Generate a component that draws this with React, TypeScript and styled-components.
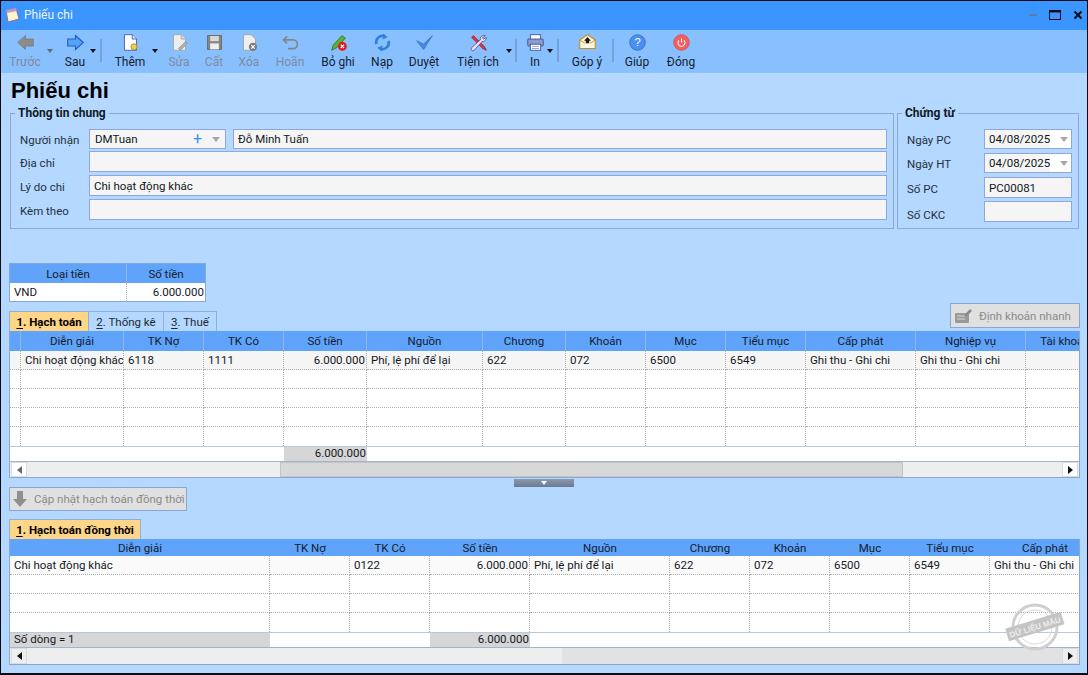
import React from "react";
import styled, { createGlobalStyle } from "styled-components";

const Global = createGlobalStyle`
  html, body { margin: 0; padding: 0; background: #b4d8ff; }
  body { font: 11.5px Roboto, "Liberation Sans", sans-serif; color: #16202c; }
  * { box-sizing: border-box; }
`;

const Win = styled.div`
  width: 1088px; height: 675px; overflow: hidden; display: flex; flex-direction: column;
  border: 1px solid #0a0a14; border-bottom-width: 2px; background: #b4d8ff;
`;
const TitleBar = styled.div`
  height: 29px; flex: none; background: #3a95fe; display: flex; align-items: center; padding: 0 4px 1px 3px; color: #fff;
`;
const TitleText = styled.span` margin-left: 4px; font-size: 12px; color: #eaf4ff; `;
const WinBtns = styled.div` margin-left: auto; display: flex; align-items: center; gap: 12px; `;

const Toolbar = styled.div`
  height: 43px; flex: none; background: #88c0ff; display: flex; padding-left: 2px;
`;
const ToolBtn = styled.div<{ $w: number; $ml?: number; $off?: boolean }>`
  width: ${p => p.$w}px; margin-left: ${p => p.$ml ?? 0}px; flex: none;
  display: flex; flex-direction: column; align-items: center; padding-top: 3px;
  color: ${p => (p.$off ? "#7f8c9c" : "#16202c")}; white-space: nowrap; font-size: 12px;
  svg { display: block; flex: none; }
  span { margin-top: 2px; line-height: 16px; }
`;
const CaretBox = styled.div<{ $w: number; $c?: string }>`
  width: ${p => p.$w}px; flex: none; padding-top: 19px;
  &::before { content: ""; display: block; width: 0; height: 0; border: 3.5px solid transparent; border-bottom: 0; border-top: 4px solid ${p => p.$c ?? "#10141c"}; }
`;
const Sep = styled.div<{ $ml?: number }>`
  width: 2px; height: 23px; margin: 9px 0 0 ${p => p.$ml ?? 0}px; flex: none; background: #75a3d8;
`;

const Body = styled.div` flex: 1; display: flex; flex-direction: column; padding: 0 7px 0 8px; min-height: 0; `;
const Heading = styled.h1`
  margin: 5px 0 0 2px; font: bold 22px/25px "Liberation Sans", sans-serif; color: #000; height: 25px; flex: none;
`;
const TopRow = styled.div` display: flex; gap: 3px; margin: 3px 0 0 1px; flex: none; `;
const Group = styled.fieldset<{ $w: number }>`
  width: ${p => p.$w}px; height: 123px; margin: 0; padding: 0 6px 0 8px; border: 1px solid #8ea8d6; flex: none; min-width: 0;
  display: flex; flex-direction: column;
`;
const Legend = styled.legend`
  margin-left: -4px; padding: 0 3px; font-weight: bold; font-size: 12px; line-height: 14px; color: #10181f;
`;
const FormRow = styled.div<{ $h?: number; $top?: number }>`
  display: flex; align-items: center; height: ${p => p.$h ?? 21}px; margin-top: ${p => p.$top ?? 3}px;
`;
const Label = styled.label<{ $w: number; $pt?: number }>` width: ${p => p.$w}px; flex: none; color: #24303c; white-space: nowrap; padding: ${p => p.$pt ?? 2}px 0 0 1px; `;
const Input = styled.div<{ $grow?: boolean; $w?: number; $bg?: string; $ml?: number }>`
  ${p => (p.$grow ? "flex: 1;" : `width: ${p.$w}px; flex: none;`)}
  margin-left: ${p => p.$ml ?? 0}px;
  height: 100%; background: ${p => p.$bg ?? "#f5f5f5"}; border: 1.5px solid #8fa7df; display: flex; align-items: center;
  padding: 0 4px; color: #101820; white-space: nowrap; overflow: hidden;
`;
const Combo = styled(Input)` padding: 0 0 0 5px; `;
const Plus = styled.span` margin-left: auto; color: #2f96f2; font-size: 16px; line-height: 16px; font-weight: normal; `;
const Arrow = styled.i`
  width: 0; height: 0; margin: 1px 5px 0 10px; border: 4px solid transparent; border-bottom: 0; border-top: 5px solid #a8a8a8; flex: none;
`;
const DateVal = styled.span` flex: 1; align-self: stretch; background: #f5f5f5; margin-left: -4px; padding-left: 4px; display: flex; align-items: center; `;

const Spacer = styled.div<{ $h: number }>` height: ${p => p.$h}px; flex: none; `;

const Table = styled.div<{ $cols: string; $w: number }>`
  width: ${p => p.$w}px; flex: none; overflow: hidden;
  display: grid; grid-template-columns: ${p => p.$cols}; background: #fff;
`;
const Head = styled.div<{ $h: number; $line?: boolean }>`
  height: ${p => p.$h}px; background: #5fa3fa; display: flex; align-items: center; justify-content: center;
  color: #14202e; white-space: nowrap; overflow: hidden;
  border-right: ${p => (p.$line ? "1px solid #8cb4e4" : "0")};
`;
const Cell = styled.div<{ $h: number; $bg?: string; $right?: boolean; $dot?: boolean; $dotRight?: boolean; $span?: string; $foot?: boolean }>`
  height: ${p => p.$h}px; background: ${p => p.$bg ?? "#fff"}; display: flex; align-items: center;
  justify-content: ${p => (p.$right ? "flex-end" : "flex-start")}; padding: 0 1px ${p => (p.$foot ? 2 : 0)}px 4px; color: #14181f;
  white-space: nowrap; overflow: hidden;
  ${p => (p.$span ? `grid-column: ${p.$span};` : "")}
  border-top: ${p => (p.$foot ? "1px solid #b8c8dc" : "0")};
  border-bottom: ${p => (p.$dot ? "1px dotted #b0b0b0" : "0")};
  border-right: ${p => (p.$dotRight ? "1px dotted #b0b0b0" : "0")};
`;
const Frame = styled.div<{ $h: number }>`
  width: 1071px; height: ${p => p.$h}px; flex: none; border: 1px solid #8ba6d2; border-top: 0; background: #fff; overflow: hidden;
  position: relative; display: flex; flex-direction: column;
`;
const CurrencyFrame = styled.div`
  width: 197px; height: 39px; flex: none; border: 1px solid #8ba6d2; background: #fff; overflow: hidden;
`;

const TabsRow = styled.div` display: flex; align-items: flex-end; height: 29px; flex: none; width: 1071px; `;
const Tab = styled.div<{ $w: number; $on?: boolean }>`
  width: ${p => p.$w}px; height: 20px; flex: none; border: 1px solid #8eaede; border-bottom: 0; margin-right: -1px;
  background: ${p => (p.$on ? "#ffd588" : "#b4d8ff")}; font-weight: ${p => (p.$on ? "bold" : "normal")};
  display: flex; align-items: center; justify-content: center; white-space: nowrap; color: ${p => (p.$on ? "#000" : "#1c2836")};
  u { text-underline-offset: 2px; }
`;
const Pressed = styled.div<{ $w: number; $h: number }>`
  width: ${p => p.$w}px; height: ${p => p.$h}px; flex: none;
  background: #e0e0e0; border: 1.5px solid #8aa6cf; color: #8a8a8a; display: flex; align-items: center; gap: 6px; padding-left: 2px; white-space: nowrap;
`;
const QuickBtn = styled(Pressed)` margin: 1px 0 0 auto; align-self: flex-start; `;

const HScroll = styled.div` flex: 1; min-height: 0; display: flex; background: #eeeeee; border-top: 1px solid #9fb4d2; padding: 0 1px; `;
const ScrollEnd = styled.div<{ $right?: boolean; $c: string; $bg: string }>`
  width: 16px; flex: none; background: ${p => p.$bg}; border: 1px solid #dcdcdc; display: flex; align-items: center; justify-content: center;
  &::before { content: ""; width: 0; height: 0; border: 4px solid transparent;
    ${p => (p.$right ? `border-right: 0; border-left: 5px solid ${p.$c};` : `border-left: 0; border-right: 5px solid ${p.$c};`)} }
`;
const Track = styled.div<{ $w: number; $bg: string; $line?: boolean }>`
  ${p => (p.$w ? `width: ${p.$w}px; flex: none;` : "flex: 1;")} background: ${p => p.$bg};
  ${p => (p.$line ? "border: 1px solid #c4c4c4;" : "")}
`;
const Splitter = styled.div`
  width: 60px; height: 8px; flex: none; margin: 1px 0 0 505px; background: linear-gradient(#8a9ab0, #6c7a8e); display: flex; align-items: center; justify-content: center;
  &::before { content: ""; width: 0; height: 0; border: 3.5px solid transparent; border-bottom: 0; border-top: 4px solid #fff; }
`;
const Stamp = styled.svg` position: absolute; right: 13px; bottom: 11px; `;

const Ico = ({ children }: { children: React.ReactNode }) => (
  <svg width="19" height="19" viewBox="0 0 22 22">{children}</svg>
);
const icons: Record<string, React.ReactNode> = {
  back: <path d="M2 11 L11 3 V7 H20 V15 H11 V19 Z" fill="#8c8c8c" stroke="#7b7b7b" />,
  next: <path d="M20 11 L11 3 V7 H2 V15 H11 V19 Z" fill="#55a2f6" stroke="#1f5fc4" strokeWidth="1.3" />,
  add: <><path d="M4 2 H13 L18 7 V20 H4 Z" fill="#fff" stroke="#3c57b0" /><path d="M13 2 V7 H18" fill="#dfe6fa" stroke="#3c57b0" /><circle cx="15" cy="16" r="3.5" fill="#f1ce5c" stroke="#a88a1c" /></>,
  edit: <><path d="M4 2 H13 L18 7 V20 H4 Z" fill="#eeeeee" stroke="#a2a2a2" /><path d="M13 2 V7 H18" fill="#ddd" stroke="#a2a2a2" /><path d="M10 18 L18 10 L20 12 L12 20 Z" fill="#b4b4b4" stroke="#8c8c8c" /></>,
  save: <><rect x="3" y="3" width="16" height="16" fill="#868686" stroke="#666" /><rect x="6" y="3.5" width="10" height="6" fill="#d8d8d8" /><rect x="6" y="12" width="10" height="7" fill="#f0f0f0" /></>,
  del: <><path d="M4 2 H13 L18 7 V20 H4 Z" fill="#efefef" stroke="#9c9c9c" /><circle cx="15" cy="16" r="4.8" fill="#7d7d7d" /><path d="M13 14 L17 18 M17 14 L13 18" stroke="#fff" strokeWidth="1.3" /></>,
  undo: <path d="M7 4 L3 8 L7 12 M3 8 H14 A5 5 0 0 1 14 18 H8" fill="none" stroke="#858585" strokeWidth="2" />,
  unpost: <><path d="M3 20 L5 14 L15 3 L19 6 L9 17 Z" fill="#5fae3a" stroke="#2f7a1e" /><circle cx="15.5" cy="15.5" r="5" fill="#e8101c" /><path d="M13.5 13.5 L17.5 17.5 M17.5 13.5 L13.5 17.5" stroke="#fff" strokeWidth="1.5" /></>,
  reload: <><path d="M4 13 A7.5 7.5 0 0 1 13 3.5" fill="none" stroke="#2f7fdb" strokeWidth="3" /><path d="M12 0.5 L17 5 L11 7.5 Z" fill="#2f7fdb" /><path d="M18 9 A7.5 7.5 0 0 1 9 18.5" fill="none" stroke="#2f7fdb" strokeWidth="3" /><path d="M10 21.5 L5 17 L11 14.5 Z" fill="#2f7fdb" /></>,
  check: <path d="M2 9 L10 19 L20 3 L10 13 Z" fill="#4b88e0" stroke="#3572cc" />,
  tools: <><path d="M3 5 L5 3 L18 16 L20 20 L16 18 Z" fill="#e4323c" stroke="#8a2a40" /><path d="M19 3 A4.5 4.5 0 0 0 13 8 L3 17 A2 2 0 0 0 6 20 L15 10 A4.5 4.5 0 0 0 20 5 L17 7 L15.5 5.5 Z" fill="#e6dcf4" stroke="#65529e" /></>,
  print: <><rect x="5" y="2" width="12" height="6" fill="#fff" stroke="#40508c" /><rect x="2" y="7" width="18" height="8" rx="1" fill="#8d9ad0" stroke="#40508c" /><rect x="5" y="13" width="12" height="7" fill="#fff" stroke="#40508c" /><path d="M7 15.5 H15 M7 18 H15" stroke="#8d9ad0" /></>,
  mail: <><path d="M2 8 L11 2 L20 8 V18 H2 Z" fill="#fff7dc" stroke="#c0902a" strokeWidth="1.3" /><path d="M2 8 L8 12 M20 8 L14 12" stroke="#c0902a" /><path d="M11 4.5 L15 9 H13 V12 H9 V9 H7 Z" fill="#1a1a1a" /></>,
  help: <><circle cx="11" cy="11" r="9" fill="#4b90ee" stroke="#2f6cc6" /><text x="11" y="15.5" textAnchor="middle" fontSize="13" fontFamily="Liberation Sans" fill="#fff">?</text></>,
  close: <><circle cx="11" cy="11" r="9" fill="#f25f62" stroke="#e04a4e" /><path d="M8.2 8.5 A4 4 0 1 0 13.8 8.5 M11 6.5 V11" fill="none" stroke="#fff" strokeWidth="1.2" /></>,
};

const T = ({ icon, label, w, off, ml }: { icon: string; label: string; w: number; off?: boolean; ml?: number }) => (
  <ToolBtn $w={w} $off={off} $ml={ml}><Ico>{icons[icon]}</Ico><span>{label}</span></ToolBtn>
);

const cols1 = [11, 103, 80, 80, 83, 116, 83, 80, 80, 80, 110, 110, 78];
const heads1 = ["", "Diễn giải", "TK Nợ", "TK Có", "Số tiền", "Nguồn", "Chương", "Khoản", "Mục", "Tiểu mục", "Cấp phát", "Nghiệp vụ", "Tài khoản"];
const row1 = ["", "Chi hoạt động khác", "6118", "1111", "6.000.000", "Phí, lệ phí để lại", "622", "072", "6500", "6549", "Ghi thu - Ghi chi", "Ghi thu - Ghi chi", ""];
const cols2 = [260, 80, 80, 100, 140, 80, 80, 80, 80, 110];
const heads2 = ["Diễn giải", "TK Nợ", "TK Có", "Số tiền", "Nguồn", "Chương", "Khoản", "Mục", "Tiểu mục", "Cấp phát"];
const row2 = ["Chi hoạt động khác", "", "0122", "6.000.000", "Phí, lệ phí để lại", "622", "072", "6500", "6549", "Ghi thu - Ghi chi"];
const tmpl = (c: number[]) => c.map(n => `${n}px`).join(" ");

export default function App() {
  return (
    <Win>
      <Global />
      <TitleBar>
        <svg width="16" height="16" viewBox="0 0 16 16">
          <path d="M2 3 L12 1 L15 12 L4 15 Z" fill="#fff6c8" stroke="#8a6fb0" />
          <path d="M2 3 L12 1 L12.6 4 L2.8 6 Z" fill="#b09ad8" />
        </svg>
        <TitleText>Phiếu chi</TitleText>
        <WinBtns>
          <svg width="8" height="12" viewBox="0 0 8 12"><rect x="0" y="5" width="8" height="2" fill="#5a7ca8" /></svg>
          <svg width="12" height="12" viewBox="0 0 12 12"><rect x="0.5" y="1.5" width="11" height="9" fill="none" stroke="#0a0a14" strokeWidth="1" /><rect x="0" y="1" width="12" height="2.4" fill="#0a0a14" /></svg>
          <svg width="10" height="10" viewBox="0 0 10 10"><path d="M1.5 1.5 L8.5 8.5 M8.5 1.5 L1.5 8.5" stroke="#0a0a14" strokeWidth="2" /></svg>
        </WinBtns>
      </TitleBar>
      <Toolbar>
        <T icon="back" label="Trước" w={44} off />
        <CaretBox $w={13} $c="#5f6b78" />
        <T icon="next" label="Sau" w={30} />
        <CaretBox $w={10} />
        <Sep />
        <T icon="add" label="Thêm" w={44} ml={6} />
        <CaretBox $w={9} />
        <T icon="edit" label="Sửa" w={36} off />
        <T icon="save" label="Cất" w={34} off />
        <T icon="del" label="Xóa" w={36} off />
        <T icon="undo" label="Hoãn" w={46} off />
        <T icon="unpost" label="Bỏ ghi" w={50} />
        <T icon="reload" label="Nạp" w={38} />
        <T icon="check" label="Duyệt" w={46} />
        <T icon="tools" label="Tiện ích" w={56} ml={3} />
        <CaretBox $w={9} />
        <Sep />
        <T icon="print" label="In" w={24} ml={6} />
        <CaretBox $w={10} />
        <Sep />
        <T icon="mail" label="Góp ý" w={50} ml={3} />
        <Sep />
        <T icon="help" label="Giúp" w={46} />
        <T icon="close" label="Đóng" w={42} />
      </Toolbar>
      <Body>
        <Heading>Phiếu chi</Heading>
        <TopRow>
          <Group $w={884}>
            <Legend>Thông tin chung</Legend>
            <FormRow $h={20} $top={9}>
              <Label $w={70}>Người nhận</Label>
              <Combo $w={137}>DMTuan<Plus>+</Plus><Arrow /></Combo>
              <Input $grow $ml={7}>Đỗ Minh Tuấn</Input>
            </FormRow>
            <FormRow $top={2}><Label $w={70}>Địa chỉ</Label><Input $grow /></FormRow>
            <FormRow><Label $w={70}>Lý do chi</Label><Input $grow>Chi hoạt động khác</Input></FormRow>
            <FormRow><Label $w={70}>Kèm theo</Label><Input $grow /></FormRow>
          </Group>
          <Group $w={182}>
            <Legend>Chứng từ</Legend>
            <FormRow $h={20} $top={9}>
              <Label $w={78}>Ngày PC</Label>
              <Input $w={88} $bg="#fff"><DateVal>04/08/2025</DateVal><Arrow /></Input>
            </FormRow>
            <FormRow $h={20} $top={4}>
              <Label $w={78}>Ngày HT</Label>
              <Input $w={88} $bg="#fff"><DateVal>04/08/2025</DateVal><Arrow /></Input>
            </FormRow>
            <FormRow $top={4}><Label $w={78}>Số PC</Label><Input $w={88}>PC00081</Input></FormRow>
            <FormRow $top={3}><Label $w={78} $pt={6}>Số CKC</Label><Input $w={88} /></FormRow>
          </Group>
        </TopRow>
        <Spacer $h={34} />
        <CurrencyFrame>
          <Table $cols="117px 78px" $w={195}>
            <Head $h={19} $line>Loại tiền</Head><Head $h={19}>Số tiền</Head>
            <Cell $h={18} $dotRight>VND</Cell><Cell $h={18} $right>6.000.000</Cell>
          </Table>
        </CurrencyFrame>
        <TabsRow>
          <Tab $w={80} $on><span><u>1</u>. Hạch toán</span></Tab>
          <Tab $w={76}><span><u>2</u>. Thống kê</span></Tab>
          <Tab $w={54}><span><u>3</u>. Thuế</span></Tab>
          <QuickBtn $w={130} $h={25}>
            <svg width="20" height="18" viewBox="0 0 20 18"><rect x="2" y="6" width="14" height="10" rx="1" fill="#9a9a9a" /><path d="M4 9 H12 M4 12 H12" stroke="#d8d8d8" /><path d="M12 9 L18 3" stroke="#8a8a8a" strokeWidth="2.5" /></svg>
            Định khoản nhanh
          </QuickBtn>
        </TabsRow>
        <Frame $h={147}>
          <Table $cols={tmpl(cols1)} $w={1069}>
            {heads1.map((h, i) => <Head key={i} $h={20} $line={i < 12}>{h}</Head>)}
            {row1.map((c, i) => <Cell key={i} $h={19} $bg="#f5f5f5" $dot $dotRight={i < 12} $right={i === 4}>{c}</Cell>)}
            {[0, 1, 2, 3].map(r => cols1.map((_, i) => <Cell key={`${r}-${i}`} $h={19} $dot={r < 3} $dotRight={i < 12} />))}
            <Cell $h={15} $foot $span="1 / span 4" />
            <Cell $h={15} $foot $bg="#d6d6d6" $right>6.000.000</Cell>
            <Cell $h={15} $foot $span="6 / -1" />
          </Table>
          <HScroll>
            <ScrollEnd $c="#6a6a6a" $bg="#fff" />
            <Track $w={253} $bg="#eeeeee" />
            <Track $w={623} $bg="#d8d8d8" $line />
            <Track $w={0} $bg="#eeeeee" />
            <ScrollEnd $right $c="#101010" $bg="#fff" />
          </HScroll>
        </Frame>
        <Splitter />
        <Pressed $w={178} $h={24}>
          <svg width="16" height="18" viewBox="0 0 16 18"><path d="M5 1 H11 V9 H15 L8 17 L1 9 H5 Z" fill="#8f8f8f" /></svg>
          Cập nhật hạch toán đồng thời
        </Pressed>
        <Spacer $h={8} />
        <Tab $w={132} $on><span><u>1</u>. Hạch toán đồng thời</span></Tab>
        <Frame $h={126}>
          <Table $cols={tmpl(cols2)} $w={1069}>
            {heads2.map((h, i) => <Head key={i} $h={17}>{h}</Head>)}
            {row2.map((c, i) => <Cell key={i} $h={19} $bg="#fafafa" $dot $dotRight={i < 9} $right={i === 3}>{c}</Cell>)}
            {[0, 1, 2].map(r => cols2.map((_, i) => <Cell key={`${r}-${i}`} $h={19} $dot={r < 2} $dotRight={i < 9} />))}
            <Cell $h={15} $foot $bg="#d6d6d6">Số dòng = 1</Cell>
            <Cell $h={15} $foot $span="2 / span 2" />
            <Cell $h={15} $foot $bg="#d6d6d6" $right>6.000.000</Cell>
            <Cell $h={15} $foot $span="5 / -1" />
          </Table>
          <HScroll>
            <ScrollEnd $c="#101010" $bg="#eeeeee" />
            <Track $w={535} $bg="#eeeeee" />
            <Track $w={0} $bg="#e2e2e2" />
            <ScrollEnd $right $c="#101010" $bg="#eeeeee" />
          </HScroll>
          <Stamp width="62" height="52" viewBox="0 0 62 52">
            <circle cx="31" cy="26" r="22" fill="none" stroke="#cfcfcf" strokeWidth="3" />
            <circle cx="31" cy="26" r="17" fill="none" stroke="#d8d8d8" strokeWidth="1" />
            <g transform="rotate(-17 31 26)">
              <rect x="2" y="19" width="58" height="13" fill="#c4c4c4" />
              <text x="31" y="29" textAnchor="middle" fontSize="8" fontWeight="bold" fontFamily="Liberation Sans" fill="#ececec">DỮ LIỆU MẪU</text>
            </g>
          </Stamp>
        </Frame>
      </Body>
    </Win>
  );
}
